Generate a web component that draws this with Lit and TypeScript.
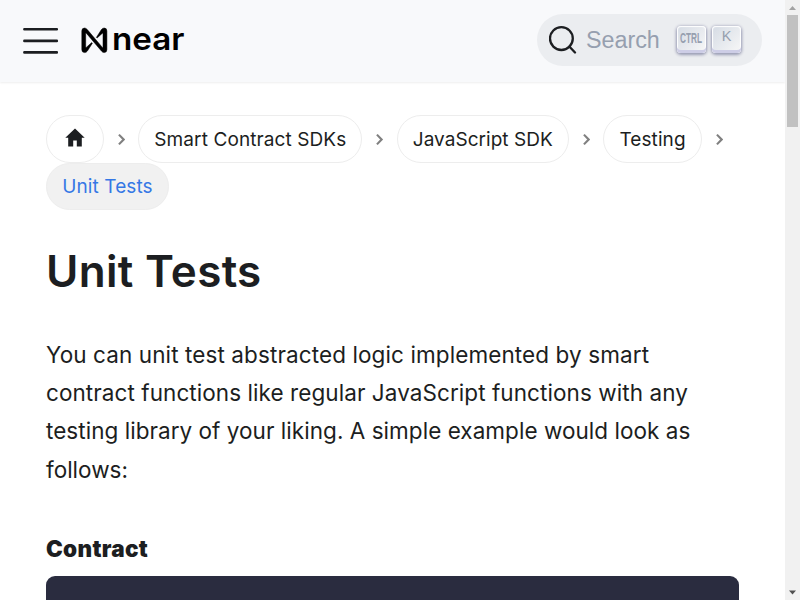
import { LitElement, html, css } from "lit";
import { customElement } from "lit/decorators.js";

const chevron = html`<svg class="chevron" width="8" height="13" viewBox="0 0 8 13" fill="none" stroke="#808080" stroke-width="2.3">
  <path d="M1 1.3 6 6.5 1 11.7" /></svg>`;

@customElement("app-root")
export class AppRoot extends LitElement {
  static styles = css`
    :host { display: flex; height: 600px; width: 800px; overflow: hidden; background: #fff; color: #1c1e21; font-family: Inter, sans-serif; }
    * { box-sizing: border-box; }
    .page { width: 785px; height: 600px; overflow: hidden; }
    .navbar { height: 82px; display: flex; align-items: center; background: #f8f9fb; padding: 0 23px; box-shadow: 0 1px 2px rgba(0,0,0,.07); }
    .menu { width: 36px; height: 28px; display: block; margin-right: 22px; }
    .logo { display: block; width: 106px; height: 36px; margin-top: -2px; overflow: visible; }
    .logo text { font: 600 31.5px Inter, sans-serif; }
    .search { margin-left: auto; width: 225px; height: 52px; border-radius: 26px; background: #ebedf0; display: flex; align-items: center; padding-left: 12px; margin-top: -2px; }
    .search svg.glass { display: block; width: 28px; height: 28px; }
    .placeholder { font: 23.3px/28px "Liberation Sans", sans-serif; color: #969faf; margin-left: 9px; width: 90.5px; }
    .key { width: 29px; height: 27px; margin: -1px 6.5px 0 0; border-radius: 4px; background: linear-gradient(-225deg, #d5dbe4, #f8f8f8); box-shadow: inset 0 -3px 0 #cdcde6, inset 0 0 1px 1px #fff, 0 1px 3px 1px rgba(30,35,90,.4); color: #969faf; display: flex; justify-content: center; font: 14.5px/20px "Liberation Sans", sans-serif; }
    .key svg { width: 24px; height: 22px; display: block; overflow: visible; }
    .key text { font: bold 15px "Liberation Sans", sans-serif; }
    .content { padding: 33px 46px 0; }
    .crumbs { display: flex; flex-wrap: wrap; align-items: center; }
    .pill { height: 48px; border: 1px solid #ededed; border-radius: 24px; font-size: 19px; line-height: 46px; padding-top: 1px; letter-spacing: .1px; display: flex; align-items: center; justify-content: center; white-space: nowrap; }
    .home { width: 58px; padding: 0 0 2px; } .sdks { width: 224.3px; } .js { width: 172.2px; letter-spacing: .04px; } .testing { width: 99px; }
    .active { width: 123px; height: 47px; background: #f1f1f1; color: #3578e5; line-height: 45px; padding-top: 0; }
    .chevron { margin: 1px 13px 0 13.7px; display: block; width: 7.5px; height: 13px; }
    h1 { margin: 33px 0 0; font-size: 44px; line-height: 56px; font-weight: 600; white-space: nowrap; letter-spacing: .3px; }
    p { margin: 37px 0 0; font-size: 22.5px; line-height: 38.2px; white-space: nowrap; }
    .l1 { letter-spacing: .1px; } .l2 { letter-spacing: .07px; } .l3 { letter-spacing: .04px; }
    h4 { margin: 45.2px 0 0; font-size: 22.5px; line-height: 30px; font-weight: 900; letter-spacing: .3px; }
    .code { height: 60px; margin-top: 12px; background: #2a2c3f; border-radius: 9px 9px 0 0; }
    .scroll { width: 15px; height: 600px; background: #f1f1f1; display: flex; flex-direction: column; align-items: center; }
    .scroll svg { display: block; width: 15px; height: 15px; }
    .thumb { width: 11px; height: 112px; background: #c1c1c1; }
    .down { margin-top: auto; }
  `;

  render() {
    return html`
      <div class="page">
        <header class="navbar">
          <svg class="menu" viewBox="0 0 36 28" stroke="#1c1e21" stroke-width="2.6" stroke-linecap="round"><path d="M1.4 2.2h32.4M1.4 13.9h32.4M1.4 25.4h32.4" /></svg>
          <svg class="logo" viewBox="0 0 106 36">
            <path fill="#000" stroke="#000" stroke-width=".5" d="M.8 9V27.6Q.8 30.6 3.6 30.6 5.3 30.6 6.4 29L11.4 21.2 10.7 20.6 5.5 25.2Q4.7 25.8 4.7 24.8V11.7Q4.7 10.5 5.5 11.4L20.4 29Q21.7 30.6 23.2 30.6 25.9 30.6 25.9 27.6V9Q25.9 6 23.2 6 21.4 6 20.4 7.6L15.4 15.4 16.1 16 21.2 11.4Q22 10.8 22 11.8V24.9Q22 26.1 21.2 25.2L6.3 7.6Q5 6 3.6 6 .8 6 .8 9Z" />
            <text x="31" y="28.3" textLength="72.5" lengthAdjust="spacingAndGlyphs">near</text>
          </svg>
          <div class="search">
            <svg class="glass" viewBox="0 0 28 28" fill="none" stroke="#1c1e21" stroke-width="2.3"><circle cx="12.4" cy="12.6" r="11.4" /><path d="M20.3 20.5 26 26.5" stroke-linecap="round" /></svg>
            <span class="placeholder">Search</span>
            <span class="key"><svg viewBox="0 0 24 22"><text x="1" y="17" fill="#969faf" textLength="22" lengthAdjust="spacingAndGlyphs">CTRL</text></svg></span>
            <span class="key">K</span>
          </div>
        </header>
        <main class="content">
          <nav class="crumbs">
            <span class="pill home"><svg width="20" height="20" viewBox="0 0 20 20"><path d="M10 .4 .3 9.8H3.2V18.6H8.2V12.4H11.8V18.6H16.8V9.8H19.7Z" fill="#1c1e21" /></svg></span>${chevron}
            <span class="pill sdks">Smart Contract SDKs</span>${chevron}
            <span class="pill js">JavaScript SDK</span>${chevron}
            <span class="pill testing">Testing</span>${chevron}
            <span class="pill active">Unit Tests</span>
          </nav>
          <h1>Unit Tests</h1>
          <p><span class="l1">You can unit test abstracted logic implemented by smart</span><br /><span class="l2">contract functions like regular JavaScript functions with any</span><br /><span class="l3">testing library of your liking. A simple example would look as</span><br />follows:</p>
          <h4>Contract</h4>
          <div class="code"></div>
        </main>
      </div>
      <div class="scroll">
        <svg viewBox="0 0 15 15"><path d="M4 10 7.5 6 11 10Z" fill="#a3a3a3" /></svg>
        <div class="thumb"></div>
        <svg class="down" viewBox="0 0 15 15"><path d="M4 5.5 7.5 9.5 11 5.5Z" fill="#505050" /></svg>
      </div>`;
  }
}
